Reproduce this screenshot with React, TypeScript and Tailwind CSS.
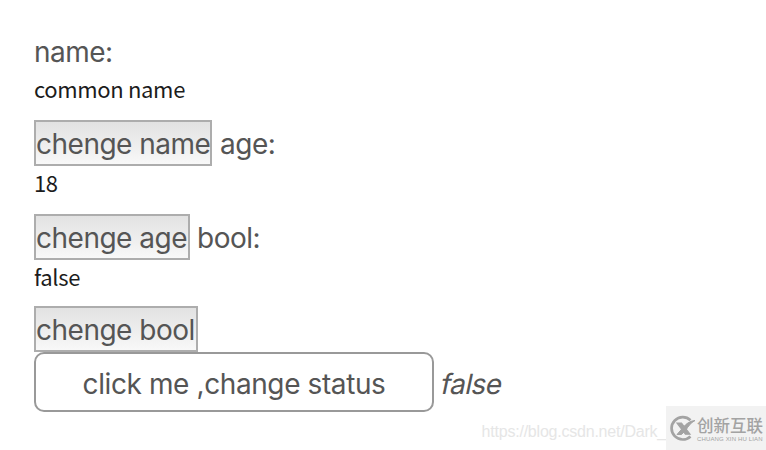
import { useState } from 'react'

const btn =
  'h-[46px] border-2 border-[#adadad] bg-linear-to-b from-[#e2e2e2] to-[#f8f8f8] text-left whitespace-nowrap leading-[44px]'
const value = "font-['Noto_Sans_CJK_SC',sans-serif] text-[22px] leading-[33px] tracking-[-0.35px] text-[#1c1c1c]"

function Logo() {
  return (
    <svg className="shrink-0" width="27" height="27" viewBox="0 0 27 27" fill="none" stroke="#a3a3a3">
      <path d="M21.5 5.2A11.2 11.2 0 1 0 21.5 21.4" strokeWidth="2.7" />
      <path d="M8 8h4.5l8.5 11.2h-4.6z" fill="#a3a3a3" strokeWidth="1.2" />
      <path d="M26 5.5c-5.5.5-9 3.5-11.500 6.500L8 19.500h4.500l4.500-4.500C19 11.500 21.500 8 26 5.500z" fill="#a3a3a3" strokeWidth="1" />
    </svg>
  )
}

export default function App() {
  const [name, setName] = useState('common name')
  const [age, setAge] = useState(18)
  const [bool, setBool] = useState(false)
  const [status, setStatus] = useState(false)

  return (
    <div className="relative h-[450px] w-[766px] overflow-hidden bg-white pl-[34px] pt-[34px] font-['Inter',sans-serif] text-[28px] tracking-[-0.5px] text-[#555]">
      <div className="h-[38px] leading-[37px]">name:</div>
      <div className={`${value} h-12`}>{name}</div>
      <div className="flex h-[46px] gap-2 leading-[48px]">
        <button className={`${btn} w-[178px]`} onClick={() => setName('new name')}>chenge name</button>
        <span>age:</span>
      </div>
      <div className={`${value} h-12`}>{age}</div>
      <div className="flex h-[46px] gap-[7px] leading-[48px]">
        <button className={`${btn} w-[156px]`} onClick={() => setAge(age + 1)}>chenge age</button>
        <span>bool:</span>
      </div>
      <div className={`${value} h-[46px]`}>{String(bool)}</div>
      <button className={`${btn} block w-[164px]`} onClick={() => setBool(!bool)}>chenge bool</button>
      <div className="flex h-[60px] gap-2 leading-[64px]">
        <button
          className="w-[400px] rounded-[10px] border-2 border-[#999] bg-white text-center leading-[60px] tracking-[-0.4px]"
          onClick={() => setStatus(!status)}
        >
          click me ,change status
        </button>
        <em className="-skew-x-12 not-italic tracking-[-0.6px]">{String(status)}</em>
      </div>
      <div className="absolute bottom-0 right-0 flex h-[44px] items-end tracking-normal">
        <span className="h-[37px] font-['Liberation_Sans',sans-serif] text-[16px] leading-[38px] tracking-[-0.22px] text-[#e6e6e6]">https://blog.csdn.net/Dark_</span>
        <div className="flex h-[44px] w-[100px] items-center gap-px bg-[#f2f2f2] pl-[3px] text-[#a3a3a3]">
          <Logo />
          <div className="whitespace-nowrap pt-[3px] font-['Liberation_Sans','Noto_Sans_CJK_SC',sans-serif]">
            <div className="text-[16.5px] font-medium leading-[19px]">创新互联</div>
            <div className="text-[6px] leading-[6px] tracking-[0.15px]">CHUANG XIN HU LIAN</div>
          </div>
        </div>
      </div>
    </div>
  )
}
